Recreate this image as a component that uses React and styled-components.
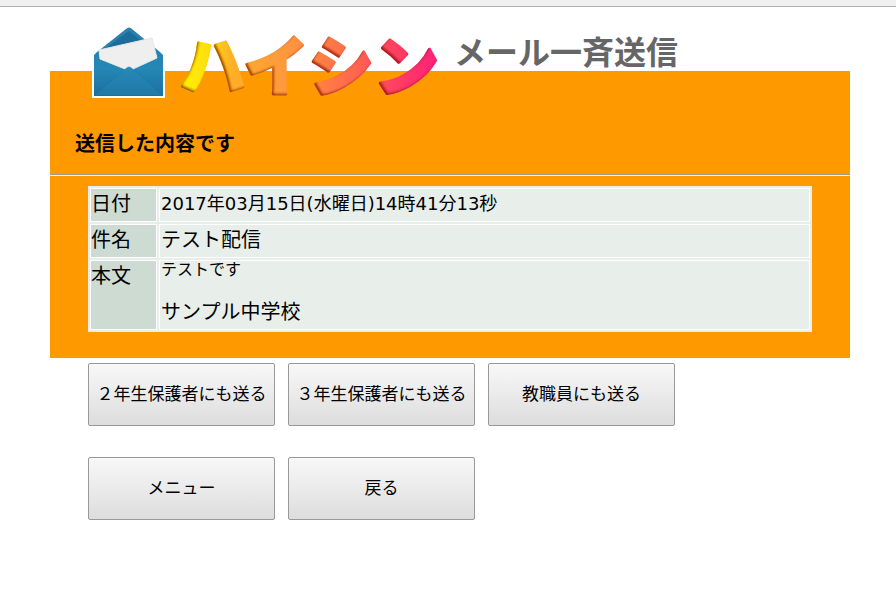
import React from "react";
import styled, { createGlobalStyle } from "styled-components";

const details = [
  { label: "日付", text: "2017年03月15日(水曜日)14時41分13秒", compact: true },
  { label: "件名", text: "テスト配信" },
];

const App = () => {
  return (
    <>
      <GlobalStyle />
      <TopEdge />
      <Page>
        <Brand>
          <Logo />
          <Tagline>メール一斉送信</Tagline>
        </Brand>
        <Panel>
          <Heading>送信した内容です</Heading>
          <Divider />
          <MailTable>
            <tbody>
              {details.map((row) => (
                <tr key={row.label}>
                  <Label scope="row">{row.label}</Label>
                  <Value $compact={row.compact}>{row.text}</Value>
                </tr>
              ))}
              <tr>
                <Label scope="row">本文</Label>
                <Value>
                  <Body>テストです</Body>
                  <Signature>サンプル中学校</Signature>
                </Value>
              </tr>
            </tbody>
          </MailTable>
        </Panel>
        <Actions>
          <Button type="button">２年生保護者にも送る</Button>
          <Button type="button">３年生保護者にも送る</Button>
          <Button type="button">教職員にも送る</Button>
        </Actions>
        <Actions>
          <Button type="button">メニュー</Button>
          <Button type="button">戻る</Button>
        </Actions>
      </Page>
    </>
  );
};

//Envelope and product name
const Logo = () => (
  <LogoSvg viewBox="0 0 350 78" role="img" aria-label="ハイシン">
    <defs>
      <linearGradient id="envelope" x1="0" y1="0" x2="0" y2="1">
        <stop offset="0" stopColor="#2a7fad" />
        <stop offset="0.6" stopColor="#2487b5" />
        <stop offset="1" stopColor="#1c6f9f" />
      </linearGradient>
      <linearGradient
        id="name"
        gradientUnits="userSpaceOnUse"
        x1="92"
        y1="0"
        x2="348"
        y2="0"
      >
        <stop offset="0" stopColor="#fff000" />
        <stop offset="0.1" stopColor="#ffdf10" />
        <stop offset="0.2" stopColor="#ffae28" />
        <stop offset="0.42" stopColor="#ff9640" />
        <stop offset="0.52" stopColor="#ff8442" />
        <stop offset="0.68" stopColor="#ff6550" />
        <stop offset="0.82" stopColor="#ff4260" />
        <stop offset="1" stopColor="#ff2078" />
      </linearGradient>
      <filter id="bevel" x="-5%" y="-10%" width="110%" height="125%">
        <feGaussianBlur in="SourceAlpha" stdDeviation="1" result="soft" />
        <feOffset in="soft" dx="2" dy="-2" result="moved" />
        <feComposite in="SourceAlpha" in2="moved" operator="out" result="edge" />
        <feFlood floodColor="#a01400" floodOpacity="0.9" />
        <feComposite in2="edge" operator="in" result="shade" />
        <feMerge>
          <feMergeNode in="SourceGraphic" />
          <feMergeNode in="shade" />
        </feMerge>
      </filter>
    </defs>
    <path
      d="M2 73V29L5 26L34 3Q39 -1 44 3L71 26L75 30V73Z"
      fill="#fff"
    />
    <path
      d="M4 71V30L7 27L36 4Q39 1 42 4L70 27L73 30V71Z"
      fill="url(#envelope)"
    />
    <path d="M12 26L39 6L64 26Z" fill="#1d6c99" />
    <path
      d="M9 25L62 13L67 33L43 44Q39 39 35 44L10 34Z"
      fill="#efefef"
      stroke="#e3e8ea"
    />
    <path d="M5 70L35 44Q39 40 43 44L72 70Z" fill="#2a8dbb" opacity="0.3" />
    <path
      d="M5 70L35 44Q39 40 43 44L72 70"
      fill="none"
      stroke="#176590"
      opacity="0.2"
    />
    <LogoText x="90" y="65">
      ハイシン
    </LogoText>
  </LogoSvg>
);

const GlobalStyle = createGlobalStyle`
  * {
    box-sizing: border-box;
  }
  body {
    margin: 0;
    background: white;
    color: black;
    font-family: "DejaVu Sans", "Noto Sans CJK JP", sans-serif;
    font-size: 20px;
  }
`;

const TopEdge = styled.div`
  height: 7px;
  background: #f0f0f0;
  border-bottom: 1px solid #b0b0b0;
`;

const Page = styled.main`
  padding: 0 46px 0 50px;
`;

//The orange starts behind the lower part of the logo
const Brand = styled.header`
  display: flex;
  align-items: flex-start;
  gap: 14px;
  padding: 18px 40px 0;
  background: linear-gradient(#fff 64px, #f90 64px);
`;

const LogoSvg = styled.svg`
  display: block;
  flex: none;
  width: 350px;
  height: 78px;
  overflow: visible;
`;

const LogoText = styled.text`
  font-family: "Noto Sans CJK JP", sans-serif;
  font-size: 65px;
  font-weight: 900;
  fill: url(#name);
  stroke: url(#name);
  stroke-width: 3px;
  stroke-linejoin: round;
  filter: url(#bevel);
`;

const Tagline = styled.p`
  margin: 8px 0 0;
  color: #666;
  font-family: "Noto Sans CJK JP", sans-serif;
  font-size: 32px;
  font-weight: 700;
  line-height: 34px;
  white-space: nowrap;
`;

const Panel = styled.section`
  padding-bottom: 26px;
  background: #f90;
`;

const Heading = styled.h1`
  margin: 0;
  padding: 26px 25px 15px;
  font-size: 20px;
  font-weight: 700;
  line-height: 30px;
`;

const Divider = styled.hr`
  margin: 0 0 10px;
  border: 0;
  border-top: 1px solid #9a9a9a;
  border-bottom: 1px solid #eee;
`;

const MailTable = styled.table`
  width: calc(100% - 76px);
  margin: 0 38px;
  border-collapse: separate;
  border-spacing: 2px;
  background: #e8eee9;
`;

const Label = styled.th`
  width: 67px;
  padding: 1px 1px 3px 0;
  border: 1px solid white;
  background: #cddbd2;
  font-weight: 400;
  line-height: 28px;
  text-align: left;
  vertical-align: top;
`;

const Value = styled.td`
  padding: 1px 1px 3px;
  border: 1px solid white;
  font-size: ${(props) => (props.$compact ? "18px" : "20px")};
  line-height: 28px;
  vertical-align: top;
`;

const Body = styled.p`
  margin: 0 0 20px;
  font-size: 16px;
  line-height: 16px;
`;

const Signature = styled.p`
  margin: 0;
`;

const Actions = styled.div`
  display: flex;
  flex-wrap: wrap;
  gap: 13px;
  padding: 5px 38px 26px;
`;

const Button = styled.button`
  width: 187px;
  height: 63px;
  padding: 0 0 4px;
  border: 1px solid #999;
  border-radius: 2px;
  background: linear-gradient(#f8f8f8, #ddd);
  color: black;
  font-family: inherit;
  font-size: 17px;
`;

export default App;
